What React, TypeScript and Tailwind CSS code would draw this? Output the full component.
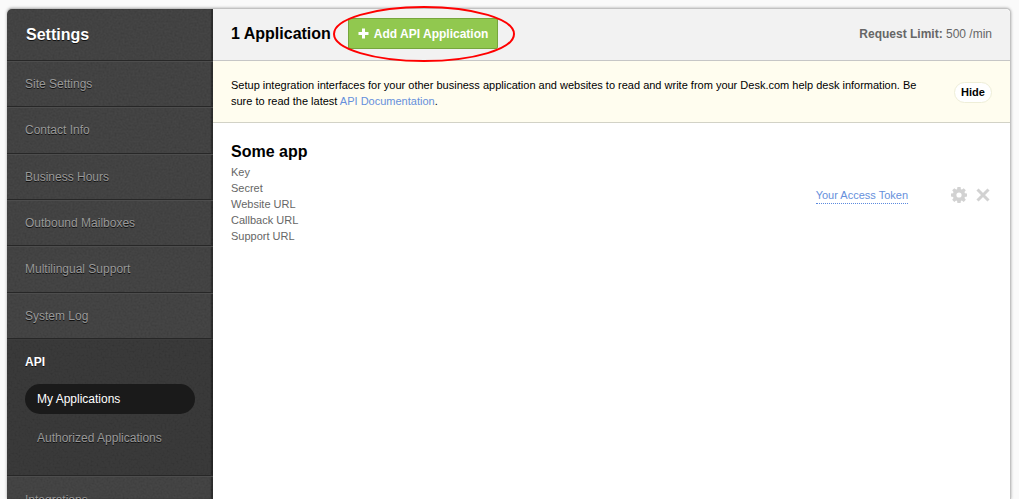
const navItems = [
  'Site Settings',
  'Contact Info',
  'Business Hours',
  'Outbound Mailboxes',
  'Multilingual Support',
  'System Log',
];

const fields = ['Key', 'Secret', 'Website URL', 'Callback URL', 'Support URL'];

const rowLine = 'border-t border-t-[#4d4d4d] border-b border-b-[#272727]';
const navLink =
  'flex h-full items-center pl-[18px] text-xs text-[#999] [text-shadow:0_1px_0_#111]';

function Grain() {
  return (
    <svg aria-hidden="true" className="pointer-events-none absolute inset-0 h-full w-full opacity-10">
      <filter id="grain">
        <feTurbulence type="fractalNoise" baseFrequency="0.5" numOctaves="2" seed="4" />
        <feColorMatrix type="saturate" values="0" />
        <feComponentTransfer>
          <feFuncA type="linear" slope="0" intercept="1" />
        </feComponentTransfer>
      </filter>
      <rect width="100%" height="100%" filter="url(#grain)" />
    </svg>
  );
}

function Sidebar() {
  return (
    <aside className="relative w-[206px] shrink-0 overflow-hidden rounded-tl-[5px] bg-[#353535] shadow-[inset_-2px_0_1px_#1c1c1c]">
      <Grain />
      <nav className="relative" aria-label="Settings">
        <h1 className="flex h-[52px] items-center border-b border-b-[#272727] pl-[19px] text-base font-bold text-white [text-shadow:0_1px_0_#111]">
          Settings
        </h1>
        <ul className="grid h-[278px] auto-rows-fr">
          {navItems.map((item) => (
            <li key={item} className={rowLine}>
              <a href="#" className={navLink}>
                {item}
              </a>
            </li>
          ))}
        </ul>
        <section className="h-[137px] border-t border-b border-t-[#3c3c3c] border-b-[#272727] bg-black/15 px-[18px] pt-[14px]">
          <h2 className="text-xs font-bold text-white [text-shadow:0_1px_0_#111]">API</h2>
          <ul className="mt-[14px] grid gap-[9px] text-xs">
            <li>
              <a
                href="#"
                aria-current="page"
                className="flex h-[30px] w-[170px] items-center rounded-full bg-[#1a1a1a] pl-3 text-white"
              >
                My Applications
              </a>
            </li>
            <li>
              <a
                href="#"
                className="flex h-[30px] w-[170px] items-center pl-3 text-[#999] [text-shadow:0_1px_0_#111]"
              >
                Authorized Applications
              </a>
            </li>
          </ul>
        </section>
        <div className={`h-[48px] ${rowLine}`}>
          <a href="#" className={navLink}>
            Integrations
          </a>
        </div>
      </nav>
    </aside>
  );
}

function GearIcon() {
  return (
    <svg viewBox="0 0 16 16" className="h-4 w-4" fill="#d2d2d2" fillRule="evenodd" aria-hidden="true">
      <path d="M6.4 0h3.200l.3 2.200 1.100.4L12.700 1.200l2.100 2.100-1.300 1.800.4 1.100 2.100.3v3l-2.100.4-.4 1.100 1.300 1.800-2.100 2.100-1.800-1.300-1 .4-.3 2H6.400l-.3-2-1-.4-1.800 1.300-2.100-2.100L2.500 11 2.100 9.900 0 9.500v-3l2.100-.3.4-1.100L1.200 3.300l2.100-2.100 1.800 1.400 1-.4zM8 5.400a2.600 2.600 0 1 0 0 5.200 2.600 2.600 0 0 0 0-5.200z" />
    </svg>
  );
}

function CloseIcon() {
  return (
    <svg viewBox="0 0 14 14" className="h-[14px] w-[14px]" fill="none" stroke="#d2d2d2" strokeWidth="3" aria-hidden="true">
      <path d="M1.500 1.500l11 11M12.500 1.500l-11 11" />
    </svg>
  );
}

export default function App() {
  return (
    <div className="flex h-screen overflow-hidden bg-[#fafafa] pt-2 pr-2 pl-[7px] font-['Liberation_Sans',Arial,sans-serif] text-black">
      <div className="flex min-w-0 flex-1 rounded-t-[5px] border-t border-r border-[#c2c2c2] bg-white shadow-[0_0_3px_rgba(0,0,0,0.35)]">
        <Sidebar />
        <main className="min-w-0 flex-1">
          <header className="flex h-[52px] items-center justify-between rounded-tr-[5px] border-b border-[#c6c6c6] bg-[#f2f2f2] px-[18px] pb-0.5">
            <div className="flex items-center gap-[17px]">
              <h2 className="text-base font-bold">1 Application</h2>
              <div className="relative">
                <button
                  type="button"
                  className="flex h-[31px] w-[150px] items-center gap-[5px] rounded-[2px] border border-[#76a63c] bg-[#91c84f] pl-[9px] text-xs font-bold whitespace-nowrap text-white"
                >
                  <svg viewBox="0 0 11 11" className="h-[11px] w-[11px] shrink-0" stroke="#fff" strokeWidth="3" aria-hidden="true">
                    <path d="M5.500 0.500v10M0.500 5.500h10" />
                  </svg>
                  Add API Application
                </button>
                <svg
                  viewBox="0 0 182 56"
                  className="pointer-events-none absolute -top-3 -left-[15px] h-[56px] w-[182px]"
                  fill="none"
                  stroke="#ff0000"
                  strokeWidth="2"
                  aria-hidden="true"
                >
                  <ellipse cx="91" cy="28" rx="90" ry="27" />
                </svg>
              </div>
            </div>
            <p className="text-xs text-[#666]">
              <b>Request Limit:</b> 500 /min
            </p>
          </header>

          <section className="flex h-[62px] items-center justify-between border-b border-[#d2d2c6] bg-[#fffdef] px-[18px] pt-0.5">
            <p className="max-w-[690px] text-[11px] leading-4">
              Setup integration interfaces for your other business application and websites to read and write
              from your Desk.com help desk information. Be sure to read the latest{' '}
              <a href="#" className="text-[#6690dc]">
                API Documentation
              </a>
              .
            </p>
            <button
              type="button"
              className="h-[21px] w-[38px] rounded-full border border-[#eeeed8] bg-white text-[11px] font-bold"
            >
              Hide
            </button>
          </section>

          <article className="flex items-center justify-between pt-[17px] pr-[20px] pl-[18px]">
            <div>
              <h3 className="text-base font-bold">Some app</h3>
              <ul className="text-[11px] leading-4 text-[#666]">
                {fields.map((field) => (
                  <li key={field}>{field}</li>
                ))}
              </ul>
            </div>
            <div className="flex items-center pt-1.5">
              <a
                href="#"
                className="border-b border-dotted border-[#5c8ade] text-[11px] leading-4 text-[#6690dc]"
              >
                Your Access Token
              </a>
              <button type="button" aria-label="Application settings" className="ml-[43px]">
                <GearIcon />
              </button>
              <button type="button" aria-label="Remove application" className="ml-[9px]">
                <CloseIcon />
              </button>
            </div>
          </article>
        </main>
      </div>
    </div>
  );
}
